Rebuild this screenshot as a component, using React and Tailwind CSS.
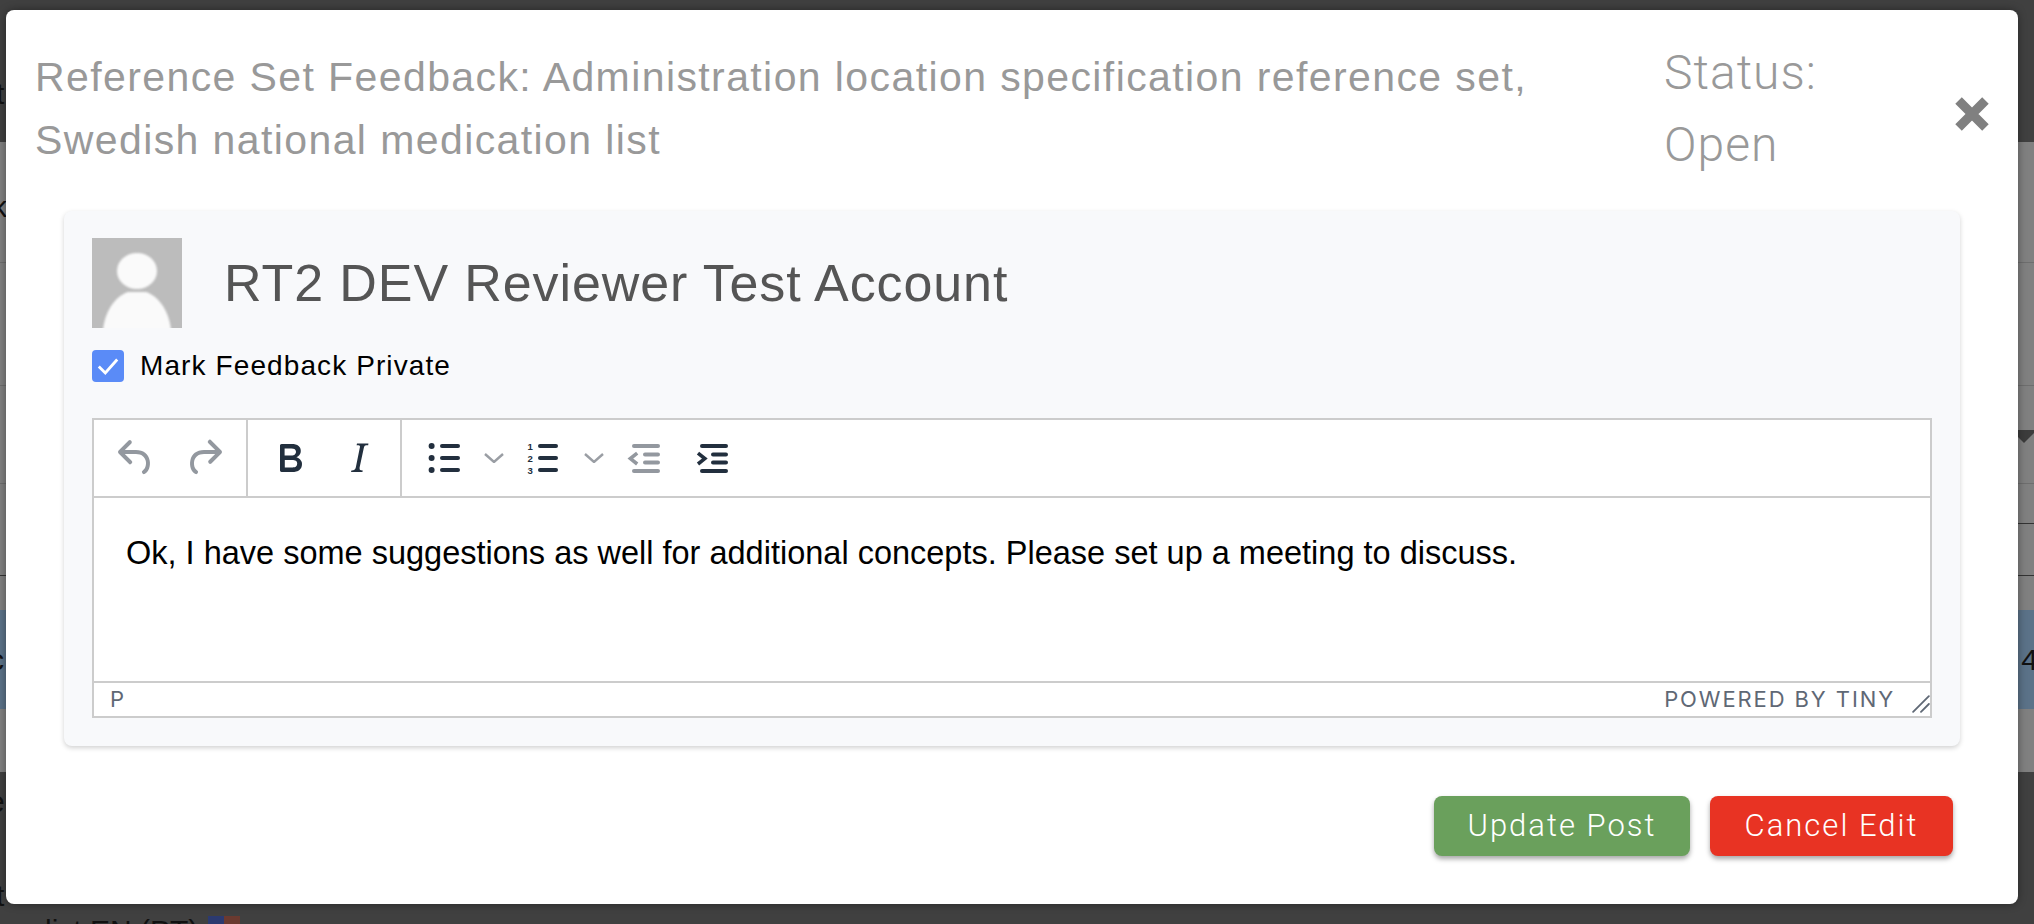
import React from 'react';

const helvetica = "font-['Liberation_Sans',Arial,sans-serif]";

function ToolIcon({ children, className = '' }) {
  return (
    <svg viewBox="0 0 24 24" className={`h-12 w-12 shrink-0 ${className}`} fill="currentColor">
      {children}
    </svg>
  );
}

function Chevron() {
  return (
    <svg viewBox="0 0 20 10" className="h-[10px] w-5 shrink-0 text-[#9a9ea4]" fill="none" stroke="currentColor" strokeWidth="2.4">
      <path d="M1 1l9 8 9-8" />
    </svg>
  );
}

function Line({ x1, x2, y }) {
  return <line x1={x1} x2={x2} y1={y} y2={y} stroke="currentColor" strokeWidth="2" strokeLinecap="round" />;
}

function Toolbar() {
  return (
    <div className="flex h-[78px] items-center border-b-2 border-[#ccc]">
      <div className="flex h-full w-[154px] items-center gap-5 border-r-2 border-[#ccc] pl-[18px] text-[#93989f]">
        <ToolIcon>
          <path d="M6.4 8H12c3.7 0 6.2 2 6.8 5.1.6 2.7-.4 5.6-2.3 6.8a1 1 0 0 1-1-1.8c1.1-.6 1.8-2.7 1.4-4.6-.5-2.1-2.1-3.5-4.9-3.5H6.4l3.3 3.3a1 1 0 1 1-1.4 1.4l-5-5a1 1 0 0 1 0-1.4l5-5a1 1 0 0 1 1.4 1.4L6.4 8Z" />
        </ToolIcon>
        <ToolIcon>
          <path d="M17.6 10H12c-2.8 0-4.4 1.4-4.9 3.5-.4 2 .3 4 1.4 4.6a1 1 0 1 1-1 1.8c-2-1.2-2.9-4.1-2.3-6.8.6-3 3-5.1 6.8-5.1h5.6l-3.3-3.3a1 1 0 1 1 1.4-1.4l5 5a1 1 0 0 1 0 1.4l-5 5a1 1 0 0 1-1.4-1.4l3.3-3.3Z" />
        </ToolIcon>
      </div>
      <div className="flex h-full w-[154px] items-center gap-[21px] border-r-2 border-[#ccc] pl-[18px] text-[#222f3e]">
        <ToolIcon>
          <path d="M7.8 19c-.3 0-.5 0-.6-.2l-.2-.5V5.7c0-.2 0-.4.2-.5l.6-.2h5c1.5 0 2.7.3 3.5 1 .7.6 1.1 1.4 1.1 2.5a3 3 0 0 1-.6 1.9c-.4.6-1 1-1.6 1.2.4.1.9.3 1.3.6s.8.7 1 1.2c.4.4.5 1 .5 1.6 0 1.3-.4 2.3-1.3 3-.8.7-2.1 1-3.8 1H7.8Zm5-8.3c.6 0 1.2-.1 1.6-.5.4-.3.6-.7.6-1.3 0-1.1-.8-1.7-2.3-1.7H9.3v3.5h3.4Zm.5 6c.7 0 1.3-.1 1.7-.4.4-.4.6-.9.6-1.5s-.2-1-.7-1.4c-.4-.3-1-.4-2-.4H9.4v3.8h4Z" />
        </ToolIcon>
        <ToolIcon>
          <path d="m16.7 4.7-.1.9h-.3c-.6 0-1 0-1.4.3-.3.3-.4.6-.5 1.1l-2.1 9.8v.6c0 .5.4.8 1.4.8h.2l-.2.8H8l.2-.8h.2c1.1 0 1.8-.5 2-1.5l2-9.8.1-.5c0-.6-.4-.8-1.4-.8h-.3l.2-.9h5.8Z" />
        </ToolIcon>
      </div>
      <div className="flex h-full items-center pl-[17px] text-[#222f3e]">
        <ToolIcon>
          <circle cx="6.3" cy="6" r="1.5" />
          <circle cx="6.3" cy="12" r="1.5" />
          <circle cx="6.3" cy="18" r="1.5" />
          <Line x1="11.5" x2="19.5" y="6" />
          <Line x1="11.5" x2="19.5" y="12" />
          <Line x1="11.5" x2="19.5" y="18" />
        </ToolIcon>
        <div className="ml-[17px]"><Chevron /></div>
        <ToolIcon className="ml-[15px]">
          <text x="4.2" y="8" fontSize="4.8" fontWeight="700" fontFamily="Liberation Sans">1</text>
          <text x="4.2" y="14" fontSize="4.8" fontWeight="700" fontFamily="Liberation Sans">2</text>
          <text x="4.2" y="20" fontSize="4.8" fontWeight="700" fontFamily="Liberation Sans">3</text>
          <Line x1="10.5" x2="18.5" y="6" />
          <Line x1="10.5" x2="18.5" y="12" />
          <Line x1="10.5" x2="18.5" y="18" />
        </ToolIcon>
        <div className="ml-[17px]"><Chevron /></div>
        <ToolIcon className="ml-4 text-[#93989f]">
          <Line x1="7" x2="19" y="6" />
          <Line x1="12.5" x2="19" y="10.3" />
          <Line x1="12.5" x2="19" y="14.3" />
          <Line x1="7" x2="19" y="18.5" />
          <path d="M8.6 9.6 5.2 12.3l3.4 2.7" fill="none" stroke="currentColor" strokeWidth="1.8" />
        </ToolIcon>
        <ToolIcon className="ml-5">
          <Line x1="7" x2="19" y="6" />
          <Line x1="12.5" x2="19" y="10.3" />
          <Line x1="12.5" x2="19" y="14.3" />
          <Line x1="7" x2="19" y="18.5" />
          <path d="M5 9.6l3.4 2.7L5 15" fill="none" stroke="currentColor" strokeWidth="1.8" />
        </ToolIcon>
      </div>
    </div>
  );
}

function Editor() {
  return (
    <div className="border-2 border-[#ccc] bg-white">
      <Toolbar />
      <div className={`h-[183px] pl-8 pt-[35px] text-[32.5px] leading-[40px] text-black ${helvetica}`}>
        Ok, I have some suggestions as well for additional concepts. Please set up a meeting to discuss.
      </div>
      <div className="flex h-[35px] items-center justify-between border-t-2 border-[#ccc] pl-4 font-['Inter',sans-serif] text-[22px] text-[#5f6875]">
        <span>P</span>
        <div className="flex items-center">
          <span className="tracking-[1.9px]">POWERED BY TINY</span>
          <svg viewBox="0 0 16 16" className="ml-[17px] mt-[8px] h-[18px] w-[18px] text-[#5f6875]" fill="none" stroke="currentColor" strokeWidth="1.6" strokeLinecap="round">
            <path d="M1 15 15 1M8 15l7-7" />
          </svg>
        </div>
      </div>
    </div>
  );
}

// what shows around the modal: the page behind it, dimmed by the backdrop
function BackgroundPage() {
  const text = `text-[30px] text-[#111] ${helvetica}`;
  return (
    <div className="flex h-screen w-full flex-col overflow-hidden bg-[#404040]">
      <div className={`flex h-[142px] items-center ${text}`}>
        <span className="-ml-[4px] mt-[44px]">t</span>
      </div>
      <div className={`flex h-[121px] items-start border-b border-[#6e6e6e] bg-[#808080] pt-[42px] ${text}`}>
        <span className="-ml-[8px]">k</span>
      </div>
      <div className="h-[123px] border-b border-[#6e6e6e] bg-[#808080]" />
      <div className="relative h-[98px] border-b border-[#6e6e6e] bg-[#808080]">
        <div className="absolute -right-[3px] top-[44px] h-0 w-0 border-x-[13px] border-t-[13px] border-x-transparent border-t-[#3c3c3c]" />
      </div>
      <div className="flex h-[40px] items-end justify-end bg-[#808080]">
        <div className="h-px w-[60px] bg-[#333]" />
      </div>
      <div className="h-[52px] border-b border-[#333] bg-[#808080]" />
      <div className="h-[34px] bg-[#808080]" />
      <div className={`flex h-[99px] items-center justify-between bg-[#5b7288] ${text}`}>
        <span className="-ml-[11px]">c</span>
        <span className="-mr-[4px]">4</span>
      </div>
      <div className="h-[63px] bg-[#808080]" />
      <div className={`h-[152px] ${text}`}>
        <span className="-ml-[12px] mt-[14px] block leading-[32px]">e</span>
        <span className="-ml-[4px] mt-[62px] block leading-[32px]">t</span>
        <div className="ml-[45px] mt-px flex items-start leading-[36px]">
          <span>list EN (PT)</span>
          <div className="ml-[10px] mt-[3px] h-8 w-8 bg-[linear-gradient(90deg,#2c3a70_50%,#6b3a30_50%)]" />
        </div>
      </div>
    </div>
  );
}

export default function App() {
  return (
    <div className="relative h-screen w-full overflow-hidden">
      <BackgroundPage />
      <div className="absolute left-[6px] top-[10px] h-[894px] w-[2012px] rounded-lg bg-white shadow-[0_0_8px_rgba(0,0,0,0.4)]">
        <div className="flex h-[201px] items-start pl-[29px]">
          <h2 className={`mt-[36px] w-[1629px] text-[41px] leading-[63px] tracking-[1.4px] text-[#999] ${helvetica}`}>
            Reference Set Feedback: Administration location specification reference set,
            <br />
            Swedish national medication list
          </h2>
          <div className="mt-[27px] font-['Roboto',sans-serif] text-[48px] font-light leading-[72px] tracking-[1px] text-[#999]">
            Status:
            <br />
            Open
          </div>
          <svg viewBox="0 0 24 24" className="ml-[138px] mt-[87px] h-[34px] w-[34px] text-[#808080]" fill="none" stroke="currentColor" strokeWidth="6.5">
            <path d="M2.5 2.5l19 19M21.5 2.5l-19 19" />
          </svg>
        </div>
        <div className="ml-[58px] w-[1896px] rounded-lg bg-[#f8f9fb] px-7 pb-[28px] pt-[27px] shadow-[0_2px_5px_rgba(0,0,0,0.18)]">
          <div className="flex items-center">
            <svg viewBox="0 0 90 90" className="h-[90px] w-[90px] shrink-0">
              <rect width="90" height="90" fill="#bcbcbc" />
              <g className="blur-[1px]">
                <ellipse cx="45" cy="33" rx="20" ry="18" fill="#fafafa" />
                <path d="M11 92C13 72 24 58 36 54L54 54C66 58 77 72 79 92Z" fill="#fafafa" />
              </g>
            </svg>
            <span className={`ml-[42px] text-[52px] tracking-[0.9px] text-[#555] ${helvetica}`}>RT2 DEV Reviewer Test Account</span>
          </div>
          <label className={`mt-[22px] flex h-8 items-center text-[28px] tracking-[1.1px] text-black ${helvetica}`}>
            <span className="flex h-8 w-8 items-center justify-center rounded bg-[#5a8bf7]">
              <svg viewBox="0 0 24 24" className="h-[26px] w-[26px] text-white" fill="none" stroke="currentColor" strokeWidth="2.6">
                <path d="M3.5 12.5l6 6L20.5 6" />
              </svg>
            </span>
            <span className="ml-4">Mark Feedback Private</span>
          </label>
          <div className="mt-9">
            <Editor />
          </div>
        </div>
        <div className="mr-[65px] mt-[49px] flex justify-end gap-5 pt-px font-['Roboto',sans-serif] text-[31px] font-light tracking-[2px] text-white">
          <button className="h-[60px] w-[256px] rounded-lg bg-[#6aa05c] shadow-[0_3px_5px_rgba(0,0,0,0.35)]">Update Post</button>
          <button className="h-[60px] w-[243px] rounded-lg bg-[#e83323] shadow-[0_3px_5px_rgba(0,0,0,0.35)]">Cancel Edit</button>
        </div>
      </div>
    </div>
  );
}
